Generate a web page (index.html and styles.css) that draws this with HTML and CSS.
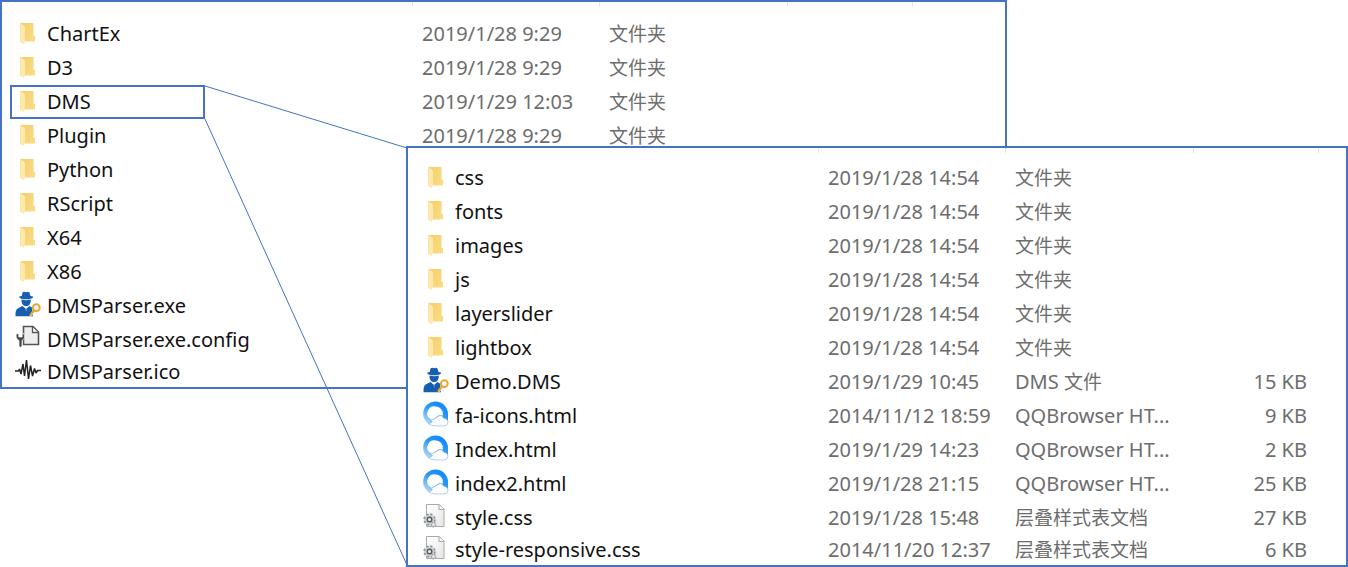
FILE: index.html
```html
<!DOCTYPE html>
<html lang="zh-CN">
<head>
<meta charset="utf-8">
<title>DMSParser</title>
<link rel="stylesheet" href="styles.css">
</head>
<body>
<svg class="defs" aria-hidden="true">
  <defs>
    <linearGradient id="gold" x1="0" y1="0" x2="1" y2="1"><stop offset="0" stop-color="#f3cf6c"/><stop offset="1" stop-color="#fbdc85"/></linearGradient>
    <linearGradient id="blue" x1="0.8" y1="0" x2="0.2" y2="1"><stop offset="0" stop-color="#0a84ff"/><stop offset="0.45" stop-color="#2c9bf3"/><stop offset="1" stop-color="#c5e3fa"/></linearGradient>
    <linearGradient id="paper" x1="0" y1="0" x2="1" y2="1"><stop offset="0" stop-color="#ffffff"/><stop offset="1" stop-color="#e6e6e6"/></linearGradient>
  </defs>
  <symbol id="folder" viewBox="0 0 26 26">
    <path d="M5 4H18.500V16.500L20 17V22.500H6Z" fill="url(#gold)"/>
    <path d="M5 4L9 6.500Q10 7 10 8.500V22.500L8.500 25L5 23Z" fill="#ffe9ac"/>
    <path d="M5.500 4.500V23" stroke="#fbe2a0" fill="none"/>
  </symbol>
  <symbol id="agent" viewBox="0 0 26 26">
    <path d="M7.500 1.500Q9 .2 11 1.200Q13 .2 14.500 1.500L15.500 5L18 5.500Q18.300 7.300 15.500 7.700Q11 8.800 6.500 7.700Q4 7.300 4.200 5.500L6.800 5Z" fill="#175eae"/>
    <path d="M6.500 8.500Q11 9.800 15.800 8.500Q16 12.800 13.500 14.400Q11.200 15.600 8.700 14.400Q6.300 12.800 6.500 8.500Z" fill="#175eae"/>
    <path d="M7.500 15L11 18L14.500 15L17 16.500L18 25.300H.5Q0 18.500 3.500 17Z" fill="#175eae"/>
    <path d="M9.800 17.200L11 18.200L12.300 17.200L11.500 21Z" fill="#5b91ca"/>
    <path d="M16 22L19 19.500L20 21L16.500 25L15 25.500Z" fill="#fff"/>
    <circle cx="21.300" cy="16.700" r="3.400" fill="#fff" stroke="#eba72d" stroke-width="2"/>
    <path d="M19 19.500L15.500 24" stroke="#eba72d" stroke-width="2.200" stroke-linecap="round"/>
  </symbol>
  <symbol id="config" viewBox="0 0 26 26">
    <path d="M8.500 1.500H18L23.500 7V19.500H8.500Z" fill="#eee" stroke="#555" stroke-width="1.600"/>
    <path d="M17.500 2V7.500H23" fill="#fff" stroke="#555" stroke-width="1.300"/>
    <path d="M1.500 8.500Q0 13.500 4 15.500V21Q5 23.500 7 21V15.500Q11 13.500 9 8.500L7.200 9V12H3.800V9Z" fill="#444" stroke="#fff" stroke-width=".7"/>
  </symbol>
  <symbol id="wave" viewBox="0 0 26 26">
    <path d="M0 14H3.500L4.500 12L6 17L8 7L9.500 19L11.500 3L13.500 22L15.500 8.500L17.500 19L19.500 11.500L21 16L22.500 13.500H26" fill="none" stroke="#222" stroke-width="1.500" stroke-linejoin="bevel"/>
  </symbol>
  <symbol id="browser" viewBox="0 0 26 26">
    <path d="M12.500 .5A12.300 12.300 0 1 0 14 25H22L25 22V13A12.400 12.400 0 0 0 12.500 .5Z" fill="url(#blue)"/>
    <path d="M12.500 5.500A7 7 0 0 0 6.500 17.500Q8.500 20 10.500 18L15 14.700Q17.500 13 19.500 15A7.200 7.200 0 0 0 12.500 5.500Z" fill="#fff"/>
    <path d="M6.500 18Q9 19.800 11 18L15 15.500Q18.500 13 20.700 17.200Q25.300 18 25 21.500Q24.500 25 21 25H13Q8 25 5 22.500Q8.500 22.500 9.500 20.500Z" fill="#fafdff" stroke="#8eb3d4" stroke-width=".6"/>
  </symbol>
  <symbol id="stylesheet" viewBox="0 0 26 26">
    <path d="M3.500 1.500H16.500L21 6V23.500H3.500Z" fill="url(#paper)" stroke="#aaa"/>
    <path d="M16 1.500V6.500H21" fill="#f5f5f5" stroke="#aaa"/>
    <circle cx="6.500" cy="16.500" r="5.200" fill="#d5dade" stroke="#8f9499" stroke-width="2" stroke-dasharray="2.300 1.800"/>
    <circle cx="6.500" cy="16.500" r="4.500" fill="#cbd0d4"/>
    <circle cx="6.500" cy="16.500" r="2.300" fill="#eee" stroke="#555a60" stroke-width="1.400"/>
    <circle cx="10.500" cy="21.500" r="2.200" fill="#e0e3e5" stroke="#999ea3" stroke-width="1.500" stroke-dasharray="1.500 1"/>
  </symbol>
</svg>

<main class="stage">
  <section class="panel panel-back">
    <table class="files">
      <colgroup><col class="col-name"><col class="col-date"><col class="col-type"><col class="col-size"><col></colgroup>
      <thead><tr><th></th><th></th><th></th><th></th><th></th></tr></thead>
      <tbody>
        <tr><td><span class="name"><svg><use href="#folder"/></svg>ChartEx</span></td><td>2019/1/28 9:29</td><td><span class="cjk">文件夹</span></td><td></td><td></td></tr>
        <tr><td><span class="name"><svg><use href="#folder"/></svg>D3</span></td><td>2019/1/28 9:29</td><td><span class="cjk">文件夹</span></td><td></td><td></td></tr>
        <tr><td><span class="name marked"><svg><use href="#folder"/></svg>DMS</span></td><td>2019/1/29 12:03</td><td><span class="cjk">文件夹</span></td><td></td><td></td></tr>
        <tr><td><span class="name"><svg><use href="#folder"/></svg>Plugin</span></td><td>2019/1/28 9:29</td><td><span class="cjk">文件夹</span></td><td></td><td></td></tr>
        <tr><td><span class="name"><svg><use href="#folder"/></svg>Python</span></td><td></td><td></td><td></td><td></td></tr>
        <tr><td><span class="name"><svg><use href="#folder"/></svg>RScript</span></td><td></td><td></td><td></td><td></td></tr>
        <tr><td><span class="name"><svg><use href="#folder"/></svg>X64</span></td><td></td><td></td><td></td><td></td></tr>
        <tr><td><span class="name"><svg><use href="#folder"/></svg>X86</span></td><td></td><td></td><td></td><td></td></tr>
        <tr><td><span class="name"><svg><use href="#agent"/></svg>DMSParser.exe</span></td><td></td><td></td><td></td><td></td></tr>
        <tr><td><span class="name"><svg><use href="#config"/></svg>DMSParser.exe.config</span></td><td></td><td></td><td></td><td></td></tr>
        <tr><td><span class="name"><svg><use href="#wave"/></svg>DMSParser.ico</span></td><td></td><td></td><td></td><td></td></tr>
      </tbody>
    </table>
  </section>

  <section class="panel panel-front">
    <table class="files">
      <colgroup><col class="col-name"><col class="col-date"><col class="col-type"><col class="col-size"><col></colgroup>
      <thead><tr><th></th><th></th><th></th><th></th><th></th></tr></thead>
      <tbody>
        <tr><td><span class="name"><svg><use href="#folder"/></svg>css</span></td><td>2019/1/28 14:54</td><td><span class="cjk">文件夹</span></td><td></td><td></td></tr>
        <tr><td><span class="name"><svg><use href="#folder"/></svg>fonts</span></td><td>2019/1/28 14:54</td><td><span class="cjk">文件夹</span></td><td></td><td></td></tr>
        <tr><td><span class="name"><svg><use href="#folder"/></svg>images</span></td><td>2019/1/28 14:54</td><td><span class="cjk">文件夹</span></td><td></td><td></td></tr>
        <tr><td><span class="name"><svg><use href="#folder"/></svg>js</span></td><td>2019/1/28 14:54</td><td><span class="cjk">文件夹</span></td><td></td><td></td></tr>
        <tr><td><span class="name"><svg><use href="#folder"/></svg>layerslider</span></td><td>2019/1/28 14:54</td><td><span class="cjk">文件夹</span></td><td></td><td></td></tr>
        <tr><td><span class="name"><svg><use href="#folder"/></svg>lightbox</span></td><td>2019/1/28 14:54</td><td><span class="cjk">文件夹</span></td><td></td><td></td></tr>
        <tr><td><span class="name"><svg><use href="#agent"/></svg>Demo.DMS</span></td><td>2019/1/29 10:45</td><td>DMS <span class="cjk">文件</span></td><td>15 KB</td><td></td></tr>
        <tr><td><span class="name"><svg><use href="#browser"/></svg>fa-icons.html</span></td><td>2014/11/12 18:59</td><td>QQBrowser HT...</td><td>9 KB</td><td></td></tr>
        <tr><td><span class="name"><svg><use href="#browser"/></svg>Index.html</span></td><td>2019/1/29 14:23</td><td>QQBrowser HT...</td><td>2 KB</td><td></td></tr>
        <tr><td><span class="name"><svg><use href="#browser"/></svg>index2.html</span></td><td>2019/1/28 21:15</td><td>QQBrowser HT...</td><td>25 KB</td><td></td></tr>
        <tr><td><span class="name"><svg><use href="#stylesheet"/></svg>style.css</span></td><td>2019/1/28 15:48</td><td><span class="cjk">层叠样式表文档</span></td><td>27 KB</td><td></td></tr>
        <tr><td><span class="name"><svg><use href="#stylesheet"/></svg>style-responsive.css</span></td><td>2014/11/20 12:37</td><td><span class="cjk">层叠样式表文档</span></td><td>6 KB</td><td></td></tr>
      </tbody>
    </table>
  </section>

  <svg class="callout" width="408" height="567" aria-hidden="true">
    <path d="M205 86L407 148M205 119L407 565"/>
  </svg>
</main>
</body>
</html>
```
FILE: styles.css
```css
* {
  box-sizing: border-box;
}

body {
  margin: 0;
  background: #fff;
  color: #111;
  font-family: "Noto Sans", "Noto Sans CJK SC", sans-serif;
  font-size: 20px;
}

.defs {
  position: absolute;
  width: 0;
  height: 0;
}

.stage {
  position: relative;
  display: grid;
  grid-template-columns: 406px 1fr 341px;
  grid-template-rows: 146px auto;
}

.panel {
  border: 2px solid #4472c4;
  background: #fff;
  overflow: hidden;
}

.panel-back {
  grid-column: 1 / 3;
  grid-row: 1 / 3;
  align-self: start;
}

.panel-front {
  grid-column: 2 / 4;
  grid-row: 2;
  z-index: 1;
}

.files {
  width: 100%;
  table-layout: fixed;
  border-collapse: collapse;
  font-size: 20px;
}

.col-name {
  width: 410px;
}

.col-date {
  width: 187px;
}

.col-type {
  width: 188px;
}

.col-size {
  width: 125px;
}

th {
  height: 15px;
  padding: 0;
}

.panel-front th {
  height: 13px;
}

th + th {
  background: linear-gradient(#e5e5e5, #e5e5e5) no-repeat 0 0 / 1px 5px;
}

td {
  height: 34px;
  padding: 0 0 0 10px;
  color: #6d6d6d;
  line-height: 30px;
  white-space: nowrap;
}

td:first-child {
  padding: 0 0 0 8px;
  color: #111;
}

td:nth-child(4) {
  padding: 0 11px 0 0;
  text-align: right;
}

tr:last-child td {
  height: 30px;
}

.name {
  display: flex;
  align-items: center;
  gap: 6px;
  padding-left: 5px;
}

.panel-front .name {
  padding-left: 7px;
}

.name svg {
  flex: none;
  width: 26px;
  height: 26px;
  margin-bottom: 4px;
}

.marked {
  width: 195px;
  height: 34px;
  box-shadow: inset 0 0 0 2px #4472c4;
}

.cjk {
  font-family: "Noto Sans CJK SC", sans-serif;
  font-size: 19px;
  line-height: 1;
}

.callout {
  position: absolute;
  top: 0;
  left: 0;
  z-index: 2;
  pointer-events: none;
}

.callout path {
  fill: none;
  stroke: #4472c4;
}
```
